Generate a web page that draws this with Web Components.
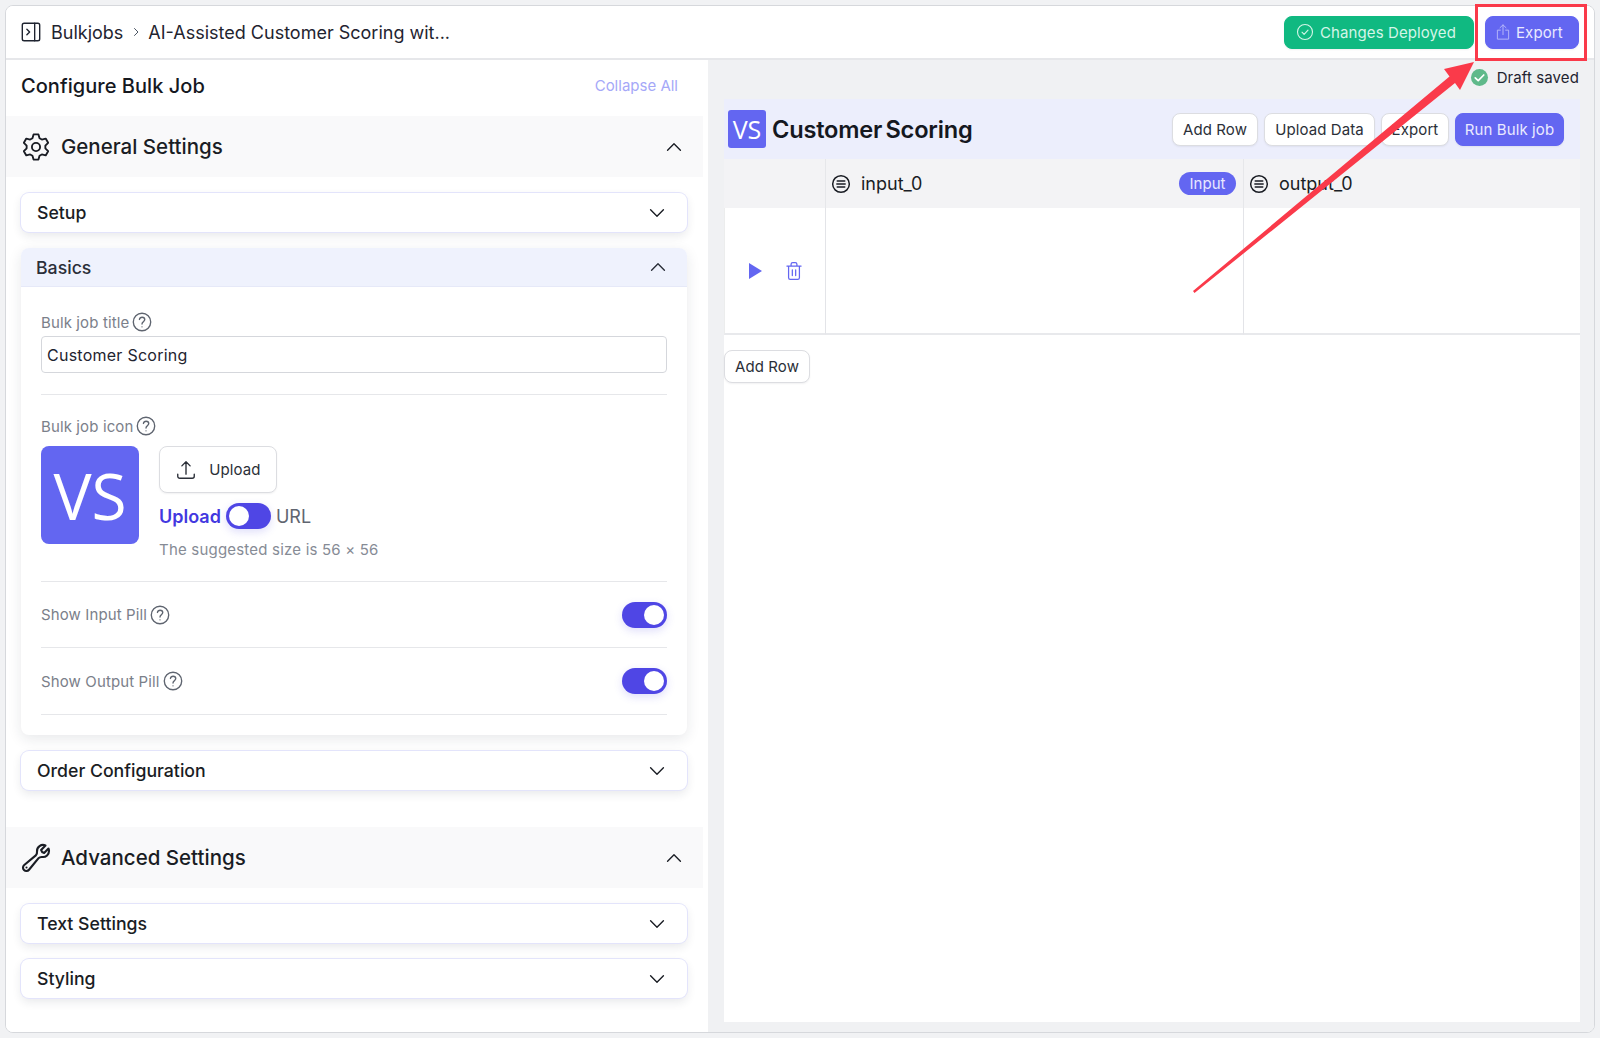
<!DOCTYPE html>
<html>
<head>
<meta charset="utf-8">
<title>Bulk job</title>
<style>
  html, body { margin: 0; padding: 0; }
  body { background: #f1f2f4; font-family: Inter, "Liberation Sans", sans-serif; color: #111827; }
</style>
</head>
<body>
<app-window>
  <top-bar slot="top"></top-bar>
  <config-panel slot="left">
    <panel-section label="General Settings" icon="gear" icon-size="28">
      <accordion-card label="Setup"></accordion-card>
      <accordion-card label="Basics" open>
        <basics-form></basics-form>
      </accordion-card>
      <accordion-card label="Order Configuration"></accordion-card>
    </panel-section>
    <panel-section label="Advanced Settings" icon="wrench" icon-size="32" style="margin-top:37px">
      <accordion-card label="Text Settings"></accordion-card>
      <accordion-card label="Styling"></accordion-card>
    </panel-section>
  </config-panel>
  <preview-pane slot="right"></preview-pane>
</app-window>
<export-callout></export-callout>

<script>
// six rounded lobes, a tooth straight up and straight down
function gearPath() {
  let pts = [];
  for (let i = 0; i < 6; i++) {
    let a = -90 + i * 60;
    [[a - 11, 11], [a + 11, 11], [a + 22, 8.1], [a + 38, 8.1]].forEach(p => {
      let r = p[0] * Math.PI / 180;
      pts.push((12 + p[1] * Math.cos(r)).toFixed(2) + ' ' + (12 + p[1] * Math.sin(r)).toFixed(2));
    });
  }
  return '<path d="M' + pts.join('L') + 'Z"/><circle cx="12" cy="12" r="3.5"/>';
}

const ICONS = {
  panel: '<rect x="2.5" y="2.5" width="19" height="19" rx="2"/><path d="M16 2.5v19M7.5 9l3 3-3 3"/>',
  chevDown: '<path d="M5 8.5l7 7 7-7"/>',
  chevUp: '<path d="M5 15.5l7-7 7 7"/>',
  chevRight: '<path d="M9 5l7 7-7 7"/>',
  gear: gearPath(),
  wrench: '<path d="M21.75 6.75a4.5 4.5 0 0 1-4.884 4.484c-1.076-.091-2.264.071-2.95.904l-7.152 8.684a2.548 2.548 0 1 1-3.586-3.586l8.684-7.152c.833-.686.995-1.874.904-2.95a4.5 4.5 0 0 1 6.336-4.486l-3.276 3.276a3.004 3.004 0 0 0 2.25 2.25l3.276-3.276c.258.58.398 1.222.398 1.852Z"/><path d="M4.867 19.125h.008v.008h-.008v-.008Z"/>',
  help: '<circle cx="12" cy="12" r="9.5"/><path d="M9.2 9.2c.3-1.5 1.5-2.4 2.9-2.4 1.6 0 2.9 1.1 2.9 2.6 0 2.3-3 2.5-3 4.8M12 17.3h.01"/>',
  upload: '<path d="M3 16.5v2.25A2.25 2.25 0 0 0 5.25 21h13.5A2.25 2.25 0 0 0 21 18.75V16.5m-13.5-9L12 3m0 0 4.5 4.5M12 3v13.5"/>',
  share: '<path d="M8.5 9.5H4.5v12h15v-12h-4M12 15.5V2.5M8 6.3l4-3.8 4 3.8"/>',
  check: '<circle cx="12" cy="12" r="10"/><path d="M8 12.3l2.8 2.8L16 9.6"/>',
  tick: '<path d="M6 12.5l4.2 4L18 8.5"/>',
  lines: '<circle cx="12" cy="12" r="10"/><path d="M7.5 8.5h9M7 12h10M7.5 15.5h9"/>',
  trash: '<path d="M3.5 6h17M8.5 6V4a2 2 0 0 1 2-2h3a2 2 0 0 1 2 2v2M5.5 6v14a2 2 0 0 0 2 2h9a2 2 0 0 0 2-2V6M10 10.5v7M14 10.5v7"/>'
};

class UiIcon extends HTMLElement {
  constructor() {
    super();
    this.attachShadow({ mode: 'open' });
  }
  connectedCallback() {
    let size = this.getAttribute('size') || 24;
    let sw = this.getAttribute('sw') || 1.5;
    this.shadowRoot.innerHTML = `
      <style>
        :host { display: inline-flex; flex: none; width: ${size}px; height: ${size}px; }
        svg { display: block; width: 100%; height: 100%; }
      </style>
      <svg viewBox="0 0 24 24" fill="none" stroke="currentColor" stroke-width="${sw}" stroke-linecap="round" stroke-linejoin="round">${ICONS[this.getAttribute('name')]}</svg>`;
  }
}
customElements.define('ui-icon', UiIcon);

class UiButton extends HTMLElement {
  constructor() {
    super();
    this.attachShadow({ mode: 'open' });
    this.shadowRoot.innerHTML = `
      <style>
        :host {
          display: inline-flex; align-items: center; justify-content: center; gap: 8px;
          box-sizing: border-box; height: 33px; padding: 0 10px;
          font-size: 15px; letter-spacing: .1px; border-radius: 8px;
          background: #fff; color: #2b2f38; border: 1.5px solid #dcdde1;
          white-space: nowrap; box-shadow: 0 1px 2px rgba(16,24,40,.06);
        }
        :host([variant=primary]) { background: #6366f1; color: #eaeaff; border-color: #6366f1; }
        :host([variant=success]) { background: #10b981; color: #d4f5e8; border-color: #10b981; }
      </style>
      <slot></slot>`;
  }
}
customElements.define('ui-button', UiButton);

class ToggleSwitch extends HTMLElement {
  constructor() {
    super();
    this.attachShadow({ mode: 'open' });
    this.shadowRoot.innerHTML = `
      <style>
        :host {
          display: inline-flex; box-sizing: border-box; flex: none;
          width: 45px; height: 26px; padding: 3px; border-radius: 13px;
          background: #4f46e5; box-shadow: 0 3px 8px rgba(79,70,229,.18);
        }
        :host([on]) { justify-content: flex-end; }
        i { display: block; width: 20px; height: 20px; border-radius: 50%; background: #fff; }
      </style>
      <i></i>`;
  }
}
customElements.define('toggle-switch', ToggleSwitch);

class VsLogo extends HTMLElement {
  constructor() {
    super();
    this.attachShadow({ mode: 'open' });
  }
  connectedCallback() {
    let size = +this.getAttribute('size');
    this.shadowRoot.innerHTML = `
      <style>
        :host {
          display: flex; flex: none; align-items: center; justify-content: center;
          width: ${size}px; height: ${size}px; border-radius: ${size > 50 ? 8 : 3}px;
          background: #6366f1; color: #fff;
          font: 400 ${Math.round(size * 0.65)}px "Open Sans", sans-serif;
        }
      </style>VS`;
  }
}
customElements.define('vs-logo', VsLogo);

class TopBar extends HTMLElement {
  constructor() {
    super();
    this.attachShadow({ mode: 'open' });
    this.shadowRoot.innerHTML = `
      <style>
        :host {
          display: flex; align-items: center; box-sizing: border-box; height: 54px;
          padding: 0 15px 0 14px; background: #fff; border-bottom: 2px solid #e6e7ea;
          font-size: 18px; color: #1f2430;
        }
        .crumb { margin-left: 9px; }
        .sep { display: flex; color: #4b5563; margin: 0 6px 0 7px; }
        .right { margin-left: auto; display: flex; gap: 11px; }
        .right ui-button { justify-content: flex-start; }
        .deployed { width: 190px; padding-left: 11px; gap: 6px; }
        .export { width: 94px; padding-left: 8px; gap: 4px; }
        .share { color: #b4b6f9; }
      </style>
      <ui-icon name="panel" size="22"></ui-icon>
      <span class="crumb">Bulkjobs</span>
      <span class="sep"><ui-icon name="chevRight" size="12" sw="2"></ui-icon></span>
      <span>AI-Assisted Customer Scoring wit...</span>
      <div class="right">
        <ui-button class="deployed" variant="success"><ui-icon name="check" size="18"></ui-icon>Changes Deployed</ui-button>
        <ui-button class="export" variant="primary"><ui-icon class="share" name="share" size="18" sw="1.3"></ui-icon>Export</ui-button>
      </div>`;
  }
}
customElements.define('top-bar', TopBar);

class ConfigPanel extends HTMLElement {
  constructor() {
    super();
    this.attachShadow({ mode: 'open' });
    this.shadowRoot.innerHTML = `
      <style>
        :host { display: block; background: #fff; }
        .head {
          display: flex; align-items: center; justify-content: space-between; box-sizing: border-box;
          height: 56px; padding: 0 30px 5px 15px;
        }
        h2 { margin: 0; font-size: 20px; font-weight: 500; letter-spacing: .05px; color: #15181f; }
        .collapse { font-size: 15px; color: #a5a8f8; }
      </style>
      <div class="head"><h2>Configure Bulk Job</h2><span class="collapse">Collapse All</span></div>
      <slot></slot>`;
  }
}
customElements.define('config-panel', ConfigPanel);

class PanelSection extends HTMLElement {
  constructor() {
    super();
    this.attachShadow({ mode: 'open' });
  }
  connectedCallback() {
    this.shadowRoot.innerHTML = `
      <style>
        :host { display: block; }
        .band {
          display: flex; align-items: center; height: 61px;
          margin-right: 5px; padding: 0 18px 0 14px; background: #f9f9fa;
          font-size: 20.5px; font-weight: 500; color: #1a1d24;
        }
        .ic { display: flex; justify-content: center; width: 32px; margin-right: 9px; }
        .band .up { margin: 0 0 0 auto; }
        .cards { display: flex; flex-direction: column; gap: 16px; padding: 16px 21px 0 15px; }
      </style>
      <div class="band">
        <span class="ic"><ui-icon name="${this.getAttribute('icon')}" size="${this.getAttribute('icon-size')}" sw="1.6"></ui-icon></span>
        <span>${this.getAttribute('label')}</span>
        <ui-icon class="up" name="chevUp" size="22"></ui-icon>
      </div>
      <div class="cards"><slot></slot></div>`;
  }
}
customElements.define('panel-section', PanelSection);

class AccordionCard extends HTMLElement {
  constructor() {
    super();
    this.attachShadow({ mode: 'open' });
  }
  connectedCallback() {
    let open = this.hasAttribute('open');
    this.shadowRoot.innerHTML = `
      <style>
        :host {
          display: block; border-radius: 8px; background: #fff; overflow: hidden;
          box-shadow: 0 0 0 1px #e3e4fb, 0 4px 10px rgba(31,41,55,.10);
        }
        :host([open]) { box-shadow: 0 4px 14px rgba(31,41,55,.10); }
        .row {
          display: flex; align-items: center; justify-content: space-between; box-sizing: border-box;
          height: 39px; padding: 0 19px 0 16px; font-size: 17.7px; font-weight: 450; color: #1a1d24;
        }
        :host([open]) .row { background: #eff2fd; padding-left: 15px; padding-right: 18px; border-bottom: 1px solid #e6e9f8; color: #2a2e38; }
      </style>
      <div class="row"><span>${this.getAttribute('label')}</span><ui-icon name="${open ? 'chevUp' : 'chevDown'}" size="22"></ui-icon></div>
      <slot></slot>`;
  }
}
customElements.define('accordion-card', AccordionCard);

class FieldLabel extends HTMLElement {
  constructor() {
    super();
    this.attachShadow({ mode: 'open' });
    this.shadowRoot.innerHTML = `
      <style>
        :host { display: flex; align-items: center; gap: 2px; height: 18px; font-size: 15px; letter-spacing: .12px; color: #7b808a; }
        ui-icon { color: #5f6570; }
      </style>
      <slot></slot><ui-icon name="help" size="22"></ui-icon>`;
  }
}
customElements.define('field-label', FieldLabel);

class BasicsForm extends HTMLElement {
  constructor() {
    super();
    this.attachShadow({ mode: 'open' });
    this.shadowRoot.innerHTML = `
      <style>
        :host { display: block; padding: 26px 20px 20px; }
        hr { border: 0; height: 1px; background: #e6e7ea; margin: 0; }
        .input {
          box-sizing: border-box; height: 37px; margin: 5px 0 21px; padding: 0 5px;
          display: flex; align-items: center; font-size: 16px; letter-spacing: .25px; color: #1f2430;
          border: 1px solid #d5d7dc; border-radius: 4px;
        }
        .icon-label { margin: 22px 0 11px; }
        .uploader { display: flex; gap: 20px; }
        .controls { display: flex; flex-direction: column; align-items: flex-start; }
        .up-btn { width: 118px; height: 47px; gap: 12px; border-radius: 8px; }
        .mode { display: flex; align-items: center; gap: 5px; margin-top: 10px; height: 26px; font-size: 18px; color: #5f6570; }
        .mode b { color: #4338e0; font-weight: 600; }
        .hint { margin-top: 11px; font-size: 15px; letter-spacing: .2px; color: #868b95; white-space: nowrap; }
        .sep1 { margin-top: 22px; }
        .switch-row { display: flex; align-items: center; justify-content: space-between; height: 66px; }
        .sep1 + .switch-row { height: 65px; }
      </style>
      <field-label>Bulk job title</field-label>
      <div class="input">Customer Scoring</div>
      <hr>
      <field-label class="icon-label">Bulk job icon</field-label>
      <div class="uploader">
        <vs-logo size="98"></vs-logo>
        <div class="controls">
          <ui-button class="up-btn"><ui-icon name="upload" size="22"></ui-icon>Upload</ui-button>
          <div class="mode"><b>Upload</b><toggle-switch></toggle-switch><span>URL</span></div>
          <div class="hint">The suggested size is 56 × 56</div>
        </div>
      </div>
      <hr class="sep1">
      <div class="switch-row"><field-label>Show Input Pill</field-label><toggle-switch on></toggle-switch></div>
      <hr>
      <div class="switch-row"><field-label>Show Output Pill</field-label><toggle-switch on></toggle-switch></div>
      <hr>`;
  }
}
customElements.define('basics-form', BasicsForm);

class PreviewPane extends HTMLElement {
  constructor() {
    super();
    this.attachShadow({ mode: 'open' });
    this.shadowRoot.innerHTML = `
      <style>
        :host { display: flex; flex-direction: column; padding: 0 14px 10px 16px; background: #f0f1f3; }
        .draft {
          display: flex; align-items: center; justify-content: flex-end; gap: 9px; box-sizing: border-box;
          height: 39px; padding: 0 1px 4px 0; font-size: 15px; letter-spacing: .1px; color: #1f2430; flex: none;
        }
        .dot { display: flex; border-radius: 50%; background: #5fb98a; color: #fff; }
        .card { flex: 1; background: #fff; }
        .bar {
          display: flex; align-items: center; gap: 6px; height: 60px; box-sizing: border-box;
          padding: 0 16px 0 4px; background: #eceefc;
        }
        .bar h1 { margin: 0 auto 0 0; font-size: 23.6px; font-weight: 600; letter-spacing: -.2px; word-spacing: -2.5px; color: #15181f; }
        .grid { display: grid; grid-template-columns: 101px 418px 1fr; }
        .th { display: flex; align-items: center; height: 49px; background: #f3f3f5; box-sizing: border-box; border-left: 1px solid #e6e7ea; font-size: 18px; color: #1a1d24; padding: 0 7px 0 5px; }
        .th:first-child { border-left: 0; }
        .th span { margin-left: 10px; }
        .pill { margin-left: auto; height: 23px; width: 57px; border-radius: 12px; background: #6366f1; color: #e8e8ff; font-size: 15px; display: flex; align-items: center; justify-content: center; }
        .td { height: 127px; box-sizing: border-box; border-left: 1px solid #e3e4e8; border-bottom: 2px solid #e8e9ec; }
        .actions { display: flex; align-items: center; color: #6366f1; padding-left: 24px; gap: 22px; border-left-color: #eceded; }
        .play { width: 0; height: 0; border-left: 13px solid #6366f1; border-top: 8px solid transparent; border-bottom: 8px solid transparent; }
        .add { margin-top: 15px; width: 86px; }
      </style>
      <div class="draft"><span class="dot"><ui-icon name="tick" size="17" sw="2.4"></ui-icon></span>Draft saved</div>
      <div class="card">
        <div class="bar">
          <vs-logo size="38"></vs-logo>
          <h1>Customer Scoring</h1>
          <ui-button style="width:86px">Add Row</ui-button>
          <ui-button style="width:111px">Upload Data</ui-button>
          <ui-button style="width:68px">Export</ui-button>
          <ui-button variant="primary" style="width:109px">Run Bulk job</ui-button>
        </div>
        <div class="grid">
          <div class="th"></div>
          <div class="th"><ui-icon name="lines" size="20" sw="1.8"></ui-icon><span>input_0</span><div class="pill">Input</div></div>
          <div class="th"><ui-icon name="lines" size="20" sw="1.8"></ui-icon><span>output_0</span></div>
          <div class="td actions"><div class="play"></div><ui-icon name="trash" size="20"></ui-icon></div>
          <div class="td"></div>
          <div class="td"></div>
        </div>
        <ui-button class="add">Add Row</ui-button>
      </div>`;
  }
}
customElements.define('preview-pane', PreviewPane);

class AppWindow extends HTMLElement {
  constructor() {
    super();
    this.attachShadow({ mode: 'open' });
    this.shadowRoot.innerHTML = `
      <style>
        :host {
          display: grid; grid-template-columns: 702px 1fr; grid-template-rows: 54px 1fr;
          box-sizing: border-box; width: 1590px; height: 1028px; margin: 5px;
          border: 1px solid #d6d8dc; border-radius: 8px; overflow: hidden; background: #fff;
        }
        .top { grid-column: 1 / 3; display: grid; }
        .left, .right { display: grid; min-height: 0; }
      </style>
      <div class="top"><slot name="top"></slot></div>
      <div class="left"><slot name="left"></slot></div>
      <div class="right"><slot name="right"></slot></div>`;
  }
}
customElements.define('app-window', AppWindow);

// annotation drawn over the screenshot, not part of the app itself
class ExportCallout extends HTMLElement {
  constructor() {
    super();
    this.attachShadow({ mode: 'open' });
    this.shadowRoot.innerHTML = `
      <style>
        :host { position: absolute; left: 0; top: 0; width: 1600px; height: 1038px; pointer-events: none; }
        svg { display: block; }
      </style>
      <svg width="1600" height="1038" viewBox="0 0 1600 1038">
        <rect x="1476.5" y="5.5" width="109" height="54" fill="none" stroke="#fa3a4a" stroke-width="3"/>
        <path d="M1193 291 L1449.5 76.5 L1444 69 L1474 62 L1460 90 L1455 83 L1194.5 293 Z" fill="#fa3a4a"/>
      </svg>`;
  }
}
customElements.define('export-callout', ExportCallout);
</script>
</body>
</html>
